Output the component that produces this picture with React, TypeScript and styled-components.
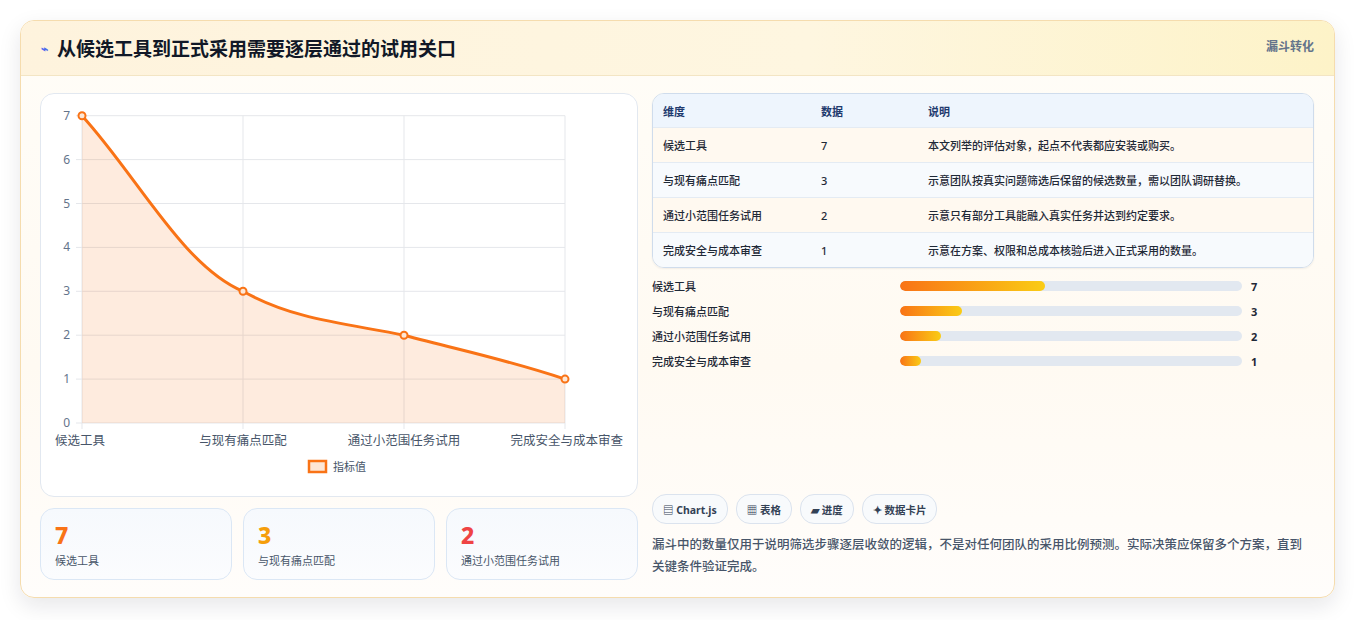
import React from "react";
import styled, { createGlobalStyle } from "styled-components";

const GlobalStyle = createGlobalStyle`
  body {
    margin: 0;
    background: #ffffff;
    font-family: "Noto Sans", "Noto Sans CJK SC", sans-serif;
    color: #0f172a;
  }
`;

const steps = [
  { name: "候选工具", value: 7, note: "本文列举的评估对象，起点不代表都应安装或购买。" },
  { name: "与现有痛点匹配", value: 3, note: "示意团队按真实问题筛选后保留的候选数量，需以团队调研替换。" },
  { name: "通过小范围任务试用", value: 2, note: "示意只有部分工具能融入真实任务并达到约定要求。" },
  { name: "完成安全与成本审查", value: 1, note: "示意在方案、权限和总成本核验后进入正式采用的数量。" },
];

const Page = styled.div`
  padding: 20px 20px 22px 20px;
`;
const Card = styled.div`
  width: 1313px;
  border: 1px solid #f5dcae;
  border-radius: 14px;
  background: linear-gradient(180deg, #fffdf8 0%, #fffaf2 60%, #fffdfb 100%);
  box-shadow: 0 8px 22px rgba(15, 23, 42, 0.1);
  overflow: hidden;
`;
const Header = styled.div`
  height: 54px;
  display: flex;
  align-items: center;
  justify-content: space-between;
  padding: 0 20px 0 20px;
  background: linear-gradient(90deg, #fef3dd 0%, #fef6e0 60%, #fdf3c8 100%);
  border-bottom: 1px solid #f3e5c4;
`;
const Title = styled.h1`
  margin: 0;
  font-size: 19px;
  font-weight: 700;
  display: flex;
  align-items: center;
  gap: 9px;
  color: #111827;
`;
const Bolt = styled.span`
  color: #4f6bed;
  font-size: 12px;
`;
const Tag = styled.span`
  align-self: flex-start;
  margin-top: 16px;
  font-size: 12px;
  font-weight: 700;
  color: #64748b;
`;
const Body = styled.div`
  display: grid;
  grid-template-columns: 598px 662px;
  gap: 14px;
  padding: 17px 19px 17px 19px;
`;
const Left = styled.div`
  display: flex;
  flex-direction: column;
  gap: 11px;
`;
const ChartBox = styled.div`
  height: 402px;
  border: 1px solid #e2e8f0;
  border-radius: 14px;
  background: #fff;
`;
const Stats = styled.div`
  display: grid;
  grid-template-columns: repeat(3, 1fr);
  gap: 11px;
`;
const Stat = styled.div`
  height: 72px;
  box-sizing: border-box;
  padding: 11px 14px;
  border: 1px solid #dbe7f5;
  border-radius: 14px;
  background: linear-gradient(180deg, #f6f9fd, #fbfcfe);
`;
const StatNum = styled.div<{ $c: string }>`
  font-size: 23px;
  font-weight: 800;
  line-height: 30px;
  color: ${(p) => p.$c};
`;
const StatLabel = styled.div`
  font-size: 11px;
  color: #475569;
  margin-top: 2px;
`;
const Right = styled.div`
  display: flex;
  flex-direction: column;
`;
const Table = styled.div`
  border: 1px solid #cfdcec;
  border-radius: 12px;
  overflow: hidden;
  box-shadow: 0 1px 2px rgba(15, 23, 42, 0.06);
`;
const Row = styled.div<{ $head?: boolean; $alt?: boolean }>`
  display: grid;
  grid-template-columns: 158px 107px 1fr;
  height: ${(p) => (p.$head ? 33 : 34)}px;
  align-items: center;
  padding-left: 10px;
  font-size: 11px;
  font-weight: ${(p) => (p.$head ? 700 : 500)};
  color: ${(p) => (p.$head ? "#1e3a6e" : "#1f2937")};
  background: ${(p) => (p.$head ? "#eef5fd" : p.$alt ? "#f7fafd" : "#fff9f0")};
  border-top: ${(p) => (p.$head ? "none" : "1px solid #e4ebf3")};
`;
const Bars = styled.div`
  display: flex;
  flex-direction: column;
  gap: 10px;
  margin-top: 10px;
`;
const BarRow = styled.div`
  display: grid;
  grid-template-columns: 248px 342px 1fr;
  align-items: center;
  height: 15px;
  font-size: 11px;
  font-weight: 500;
  color: #1f2937;
`;
const Track = styled.div`
  height: 10px;
  border-radius: 5px;
  background: #e2e8f0;
  overflow: hidden;
`;
const Fill = styled.div`
  height: 100%;
  border-radius: 5px;
  background: linear-gradient(90deg, #f97316, #facc15);
`;
const BarVal = styled.span`
  padding-left: 9px;
  font-weight: 700;
`;
const Chips = styled.div`
  margin-top: auto;
  display: flex;
  gap: 8px;
`;
const Chip = styled.span`
  height: 28px;
  display: inline-flex;
  align-items: center;
  padding: 0 10px;
  border: 1px solid #dbe3ee;
  border-radius: 14px;
  background: #f8fafc;
  font-size: 10.5px;
  font-weight: 700;
  color: #334155;
`;
const Note = styled.p`
  margin: 10px 0 2px 0;
  font-size: 12.5px;
  line-height: 22px;
  color: #475569;
  font-weight: 500;
`;

const X0 = 41;
const X1 = 524;
const Y0 = 329;
const YU = 43.9;
const xs = [41, 202, 363, 524];
const ys = steps.map((s) => Y0 - s.value * YU);

function Chart() {
  const curve = `M${xs[0]},${ys[0]} C${xs[0] + 55},${ys[0] + 60} ${xs[1] - 60},${ys[1] - 25} ${xs[1]},${ys[1]} C${xs[1] + 50},${ys[1] + 28} ${xs[2] - 60},${ys[2] - 12} ${xs[2]},${ys[2]} C${xs[2] + 60},${ys[2] + 16} ${xs[3] - 60},${ys[3] - 20} ${xs[3]},${ys[3]}`;
  return (
    <svg width="597" height="402" fontFamily="Noto Sans, Noto Sans CJK SC, sans-serif">
      {[0, 1, 2, 3, 4, 5, 6, 7].map((v) => (
        <g key={v}>
          <line x1={X0 - 6} x2={X1} y1={Y0 - v * YU} y2={Y0 - v * YU} stroke="#e5e7eb" />
          <text x={X0 - 12} y={Y0 - v * YU + 4} fontSize="12" fill="#64748b" textAnchor="end">{v}</text>
        </g>
      ))}
      {xs.map((x) => (
        <line key={x} x1={x} x2={x} y1={ys[0]} y2={Y0 + 6} stroke="#e5e7eb" />
      ))}
      <path d={`${curve} L${X1},${Y0} L${X0},${Y0} Z`} fill="rgba(249,115,22,0.14)" />
      <path d={curve} fill="none" stroke="#f97316" strokeWidth="3" />
      {xs.map((x, i) => (
        <circle key={x} cx={x} cy={ys[i]} r="3.5" fill="#fde7d6" stroke="#f97316" strokeWidth="2" />
      ))}
      {steps.map((s, i) => (
        <text key={s.name} x={i === 0 ? 14 : i === 3 ? 582 : xs[i]} y={351} fontSize="12.5" fill="#475569" textAnchor={i === 0 ? "start" : i === 3 ? "end" : "middle"}>
          {s.name}
        </text>
      ))}
      <rect x={268} y={367} width={17} height={11} fill="#fde7d6" stroke="#f97316" strokeWidth="2.5" />
      <text x={292} y={377} fontSize="11" fill="#475569">指标值</text>
    </svg>
  );
}

export default function App() {
  const colors = ["#f97316", "#f59e0b", "#ef4444"];
  return (
    <Page>
      <GlobalStyle />
      <Card>
        <Header>
          <Title>
            <Bolt>⌁</Bolt>从候选工具到正式采用需要逐层通过的试用关口
          </Title>
          <Tag>漏斗转化</Tag>
        </Header>
        <Body>
          <Left>
            <ChartBox>
              <Chart />
            </ChartBox>
            <Stats>
              {steps.slice(0, 3).map((s, i) => (
                <Stat key={s.name}>
                  <StatNum $c={colors[i]}>{s.value}</StatNum>
                  <StatLabel>{s.name}</StatLabel>
                </Stat>
              ))}
            </Stats>
          </Left>
          <Right>
            <Table>
              <Row $head>
                <span>维度</span>
                <span>数据</span>
                <span>说明</span>
              </Row>
              {steps.map((s, i) => (
                <Row key={s.name} $alt={i % 2 === 1}>
                  <span>{s.name}</span>
                  <span>{s.value}</span>
                  <span>{s.note}</span>
                </Row>
              ))}
            </Table>
            <Bars>
              {steps.map((s) => (
                <BarRow key={s.name}>
                  <span>{s.name}</span>
                  <Track>
                    <Fill style={{ width: `${(s.value / 16.5) * 100}%` }} />
                  </Track>
                  <BarVal>{s.value}</BarVal>
                </BarRow>
              ))}
            </Bars>
            <Chips>
              <Chip>▤ Chart.js</Chip>
              <Chip>▦ 表格</Chip>
              <Chip>▰ 进度</Chip>
              <Chip>✦ 数据卡片</Chip>
            </Chips>
            <Note>
              漏斗中的数量仅用于说明筛选步骤逐层收敛的逻辑，不是对任何团队的采用比例预测。实际决策应保留多个方案，直到关键条件验证完成。
            </Note>
          </Right>
        </Body>
      </Card>
    </Page>
  );
}
